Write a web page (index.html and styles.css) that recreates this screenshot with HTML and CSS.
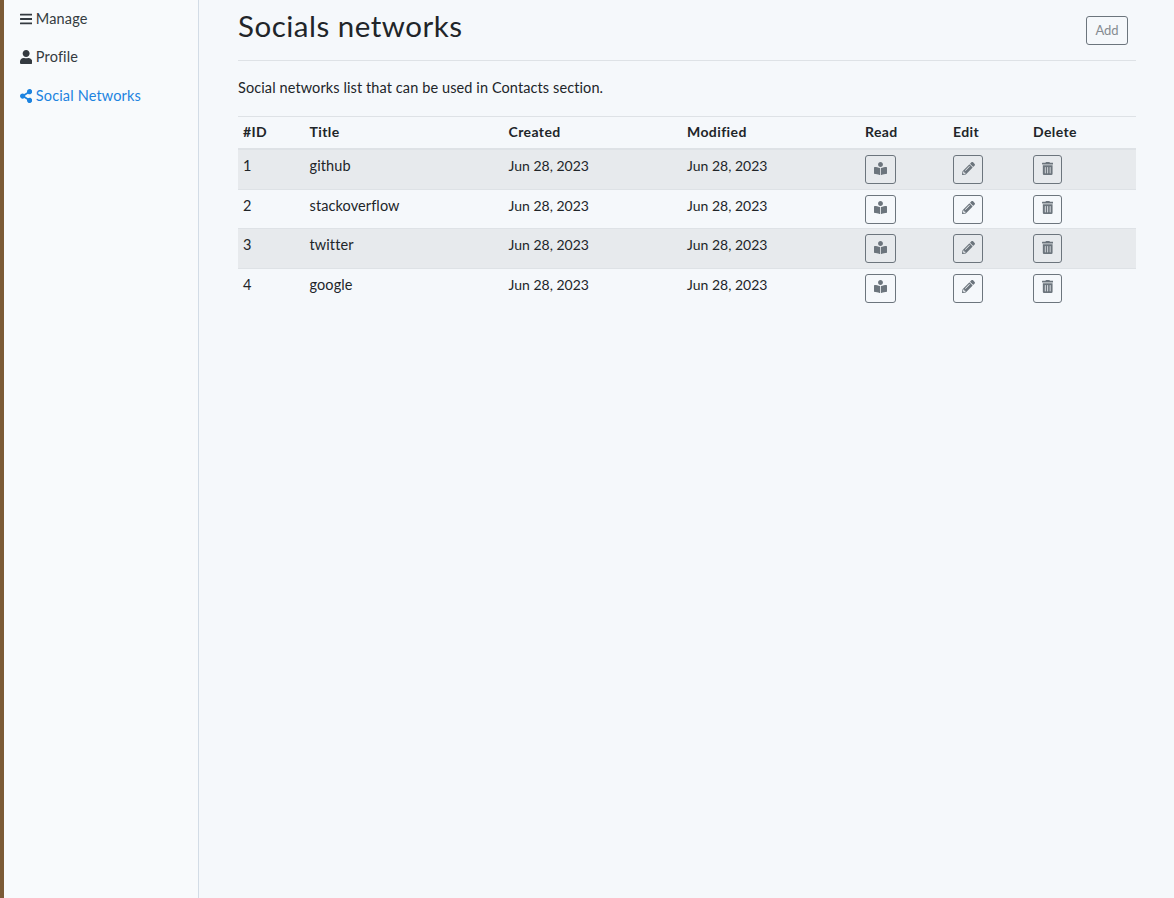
FILE: index.html
```html
<!DOCTYPE html>
<html lang="en">
<head>
  <meta charset="utf-8">
  <title>Socials networks</title>
  <link rel="stylesheet" href="styles.css">
</head>
<body>
<div class="wrapper">

  <nav class="sidebar">
    <a class="nav-link" href="#">
      <svg class="nav-icon" viewBox="0 0 448 512"><path d="M16 132h416c8.837 0 16-7.163 16-16V76c0-8.837-7.163-16-16-16H16C7.163 60 0 67.163 0 76v40c0 8.837 7.163 16 16 16zm0 160h416c8.837 0 16-7.163 16-16v-40c0-8.837-7.163-16-16-16H16c-8.837 0-16 7.163-16 16v40c0 8.837 7.163 16 16 16zm0 160h416c8.837 0 16-7.163 16-16v-40c0-8.837-7.163-16-16-16H16c-8.837 0-16 7.163-16 16v40c0 8.837 7.163 16 16 16z"/></svg>
      Manage
    </a>
    <a class="nav-link" href="#">
      <svg class="nav-icon" viewBox="0 0 448 512"><path d="M224 256c70.7 0 128-57.3 128-128S294.7 0 224 0 96 57.3 96 128s57.3 128 128 128zm89.6 32h-16.7c-22.2 10.2-46.9 16-72.9 16s-50.6-5.8-72.9-16h-16.7C60.2 288 0 348.2 0 422.4V464c0 26.5 21.5 48 48 48h352c26.5 0 48-21.5 48-48v-41.6c0-74.2-60.2-134.4-134.4-134.4z"/></svg>
      Profile
    </a>
    <a class="nav-link active" href="#">
      <svg class="nav-icon" viewBox="0 0 448 512"><path d="M352 320c-22.608 0-43.387 7.819-59.79 20.895l-102.486-64.054a96.551 96.551 0 0 0 0-41.683l102.486-64.054C308.613 184.181 329.392 192 352 192c53.019 0 96-42.981 96-96S405.019 0 352 0s-96 42.981-96 96c0 7.158.79 14.13 2.276 20.841L155.79 180.895C139.387 167.819 118.608 160 96 160c-53.019 0-96 42.981-96 96s42.981 96 96 96c22.608 0 43.387-7.819 59.79-20.895l102.486 64.054A96.301 96.301 0 0 0 256 416c0 53.019 42.981 96 96 96s96-42.981 96-96-42.981-96-96-96z"/></svg>
      Social Networks
    </a>
  </nav>

  <main class="content">
    <div class="page-head">
      <h1 class="page-title">Socials networks</h1>
      <a class="btn btn-add" href="#">Add</a>
    </div>

    <p class="lead-text">Social networks list that can be used in Contacts section.</p>

    <table class="list-table">
      <thead>
        <tr>
          <th class="col-id">#ID</th>
          <th class="col-title">Title</th>
          <th class="col-created">Created</th>
          <th class="col-modified">Modified</th>
          <th class="col-read">Read</th>
          <th class="col-edit">Edit</th>
          <th>Delete</th>
        </tr>
      </thead>
      <tbody>
        <tr>
          <td>1</td><td>github</td><td class="cell-date">Jun 28, 2023</td><td class="cell-date">Jun 28, 2023</td>
          <td><a class="btn btn-read" href="#"><svg class="btn-icon" viewBox="0 0 512 512"><path d="M352 96c0-53.02-42.98-96-96-96s-96 42.98-96 96 42.98 96 96 96 96-42.98 96-96zM233.59 241.1c-59.33-36.32-155.43-46.3-203.79-49.05C13.55 191.13 0 203.51 0 219.14v222.8c0 14.33 11.59 26.28 26.49 27.05 43.66 2.29 131.99 10.68 193.04 41.43 9.37 4.72 20.48-1.71 20.48-11.87V252.56c-.01-4.67-2.32-8.95-6.42-11.46zm248.61-49.05c-48.35 2.74-144.46 12.73-203.78 49.05-4.1 2.51-6.41 6.96-6.41 11.63v245.79c0 10.19 11.14 16.63 20.54 11.9 61.04-30.72 149.32-39.11 192.97-41.4 14.9-.78 26.49-12.73 26.49-27.06V219.14c-.01-15.63-13.56-28.01-29.81-27.09z"/></svg></a></td>
          <td><a class="btn btn-edit" href="#"><svg class="btn-icon" viewBox="0 0 512 512"><path d="M497.9 142.1l-46.1 46.1c-4.7 4.7-12.3 4.7-17 0l-111-111c-4.7-4.7-4.7-12.3 0-17l46.1-46.1c18.7-18.7 49.1-18.7 67.9 0l60.1 60.1c18.8 18.7 18.8 49.1 0 67.9zM284.2 99.8L21.6 362.4.4 483.9c-2.9 16.4 11.4 30.6 27.8 27.8l121.5-21.3 262.6-262.6c4.7-4.7 4.7-12.3 0-17l-111-111c-4.8-4.7-12.4-4.7-17.1 0zM124.1 339.9c-5.5-5.5-5.5-14.3 0-19.8l154-154c5.5-5.5 14.3-5.5 19.8 0s5.5 14.3 0 19.8l-154 154c-5.5 5.5-14.3 5.5-19.8 0zM88 424h48v36.3l-64.5 11.3-31.1-31.1L51.7 376H88v48z"/></svg></a></td>
          <td><a class="btn btn-delete" href="#"><svg class="btn-icon trash" viewBox="0 0 448 512"><path d="M32 464a48 48 0 0 0 48 48h288a48 48 0 0 0 48-48V128H32zm272-256a16 16 0 0 1 32 0v224a16 16 0 0 1-32 0zm-96 0a16 16 0 0 1 32 0v224a16 16 0 0 1-32 0zm-96 0a16 16 0 0 1 32 0v224a16 16 0 0 1-32 0zM432 32H312l-9.4-18.7A24 24 0 0 0 281.1 0H166.8a23.72 23.72 0 0 0-21.4 13.3L136 32H16A16 16 0 0 0 0 48v32a16 16 0 0 0 16 16h416a16 16 0 0 0 16-16V48a16 16 0 0 0-16-16z"/></svg></a></td>
        </tr>
        <tr>
          <td>2</td><td>stackoverflow</td><td class="cell-date">Jun 28, 2023</td><td class="cell-date">Jun 28, 2023</td>
          <td><a class="btn btn-read" href="#"><svg class="btn-icon" viewBox="0 0 512 512"><path d="M352 96c0-53.02-42.98-96-96-96s-96 42.98-96 96 42.98 96 96 96 96-42.98 96-96zM233.59 241.1c-59.33-36.32-155.43-46.3-203.79-49.05C13.55 191.13 0 203.51 0 219.14v222.8c0 14.33 11.59 26.28 26.49 27.05 43.66 2.29 131.99 10.68 193.04 41.43 9.37 4.72 20.48-1.71 20.48-11.87V252.56c-.01-4.67-2.32-8.95-6.42-11.46zm248.61-49.05c-48.35 2.74-144.46 12.73-203.78 49.05-4.1 2.51-6.41 6.96-6.41 11.63v245.79c0 10.19 11.14 16.63 20.54 11.9 61.04-30.72 149.32-39.11 192.97-41.4 14.9-.78 26.49-12.73 26.49-27.06V219.14c-.01-15.63-13.56-28.01-29.81-27.09z"/></svg></a></td>
          <td><a class="btn btn-edit" href="#"><svg class="btn-icon" viewBox="0 0 512 512"><path d="M497.9 142.1l-46.1 46.1c-4.7 4.7-12.3 4.7-17 0l-111-111c-4.7-4.7-4.7-12.3 0-17l46.1-46.1c18.7-18.7 49.1-18.7 67.9 0l60.1 60.1c18.8 18.7 18.8 49.1 0 67.9zM284.2 99.8L21.6 362.4.4 483.9c-2.9 16.4 11.4 30.6 27.8 27.8l121.5-21.3 262.6-262.6c4.7-4.7 4.7-12.3 0-17l-111-111c-4.8-4.7-12.4-4.7-17.1 0zM124.1 339.9c-5.5-5.5-5.5-14.3 0-19.8l154-154c5.5-5.5 14.3-5.5 19.8 0s5.5 14.3 0 19.8l-154 154c-5.5 5.5-14.3 5.5-19.8 0zM88 424h48v36.3l-64.5 11.3-31.1-31.1L51.7 376H88v48z"/></svg></a></td>
          <td><a class="btn btn-delete" href="#"><svg class="btn-icon trash" viewBox="0 0 448 512"><path d="M32 464a48 48 0 0 0 48 48h288a48 48 0 0 0 48-48V128H32zm272-256a16 16 0 0 1 32 0v224a16 16 0 0 1-32 0zm-96 0a16 16 0 0 1 32 0v224a16 16 0 0 1-32 0zm-96 0a16 16 0 0 1 32 0v224a16 16 0 0 1-32 0zM432 32H312l-9.4-18.7A24 24 0 0 0 281.1 0H166.8a23.72 23.72 0 0 0-21.4 13.3L136 32H16A16 16 0 0 0 0 48v32a16 16 0 0 0 16 16h416a16 16 0 0 0 16-16V48a16 16 0 0 0-16-16z"/></svg></a></td>
        </tr>
        <tr>
          <td>3</td><td>twitter</td><td class="cell-date">Jun 28, 2023</td><td class="cell-date">Jun 28, 2023</td>
          <td><a class="btn btn-read" href="#"><svg class="btn-icon" viewBox="0 0 512 512"><path d="M352 96c0-53.02-42.98-96-96-96s-96 42.98-96 96 42.98 96 96 96 96-42.98 96-96zM233.59 241.1c-59.33-36.32-155.43-46.3-203.79-49.05C13.55 191.13 0 203.51 0 219.14v222.8c0 14.33 11.59 26.28 26.49 27.05 43.66 2.29 131.99 10.68 193.04 41.43 9.37 4.72 20.48-1.71 20.48-11.87V252.56c-.01-4.67-2.32-8.95-6.42-11.46zm248.61-49.05c-48.35 2.74-144.46 12.73-203.78 49.05-4.1 2.51-6.41 6.96-6.41 11.63v245.79c0 10.19 11.14 16.63 20.54 11.9 61.04-30.72 149.32-39.11 192.97-41.4 14.9-.78 26.49-12.73 26.49-27.06V219.14c-.01-15.63-13.56-28.01-29.81-27.09z"/></svg></a></td>
          <td><a class="btn btn-edit" href="#"><svg class="btn-icon" viewBox="0 0 512 512"><path d="M497.9 142.1l-46.1 46.1c-4.7 4.7-12.3 4.7-17 0l-111-111c-4.7-4.7-4.7-12.3 0-17l46.1-46.1c18.7-18.7 49.1-18.7 67.9 0l60.1 60.1c18.8 18.7 18.8 49.1 0 67.9zM284.2 99.8L21.6 362.4.4 483.9c-2.9 16.4 11.4 30.6 27.8 27.8l121.5-21.3 262.6-262.6c4.7-4.7 4.7-12.3 0-17l-111-111c-4.8-4.7-12.4-4.7-17.1 0zM124.1 339.9c-5.5-5.5-5.5-14.3 0-19.8l154-154c5.5-5.5 14.3-5.5 19.8 0s5.5 14.3 0 19.8l-154 154c-5.5 5.5-14.3 5.5-19.8 0zM88 424h48v36.3l-64.5 11.3-31.1-31.1L51.7 376H88v48z"/></svg></a></td>
          <td><a class="btn btn-delete" href="#"><svg class="btn-icon trash" viewBox="0 0 448 512"><path d="M32 464a48 48 0 0 0 48 48h288a48 48 0 0 0 48-48V128H32zm272-256a16 16 0 0 1 32 0v224a16 16 0 0 1-32 0zm-96 0a16 16 0 0 1 32 0v224a16 16 0 0 1-32 0zm-96 0a16 16 0 0 1 32 0v224a16 16 0 0 1-32 0zM432 32H312l-9.4-18.7A24 24 0 0 0 281.1 0H166.8a23.72 23.72 0 0 0-21.4 13.3L136 32H16A16 16 0 0 0 0 48v32a16 16 0 0 0 16 16h416a16 16 0 0 0 16-16V48a16 16 0 0 0-16-16z"/></svg></a></td>
        </tr>
        <tr>
          <td>4</td><td>google</td><td class="cell-date">Jun 28, 2023</td><td class="cell-date">Jun 28, 2023</td>
          <td><a class="btn btn-read" href="#"><svg class="btn-icon" viewBox="0 0 512 512"><path d="M352 96c0-53.02-42.98-96-96-96s-96 42.98-96 96 42.98 96 96 96 96-42.98 96-96zM233.59 241.1c-59.33-36.32-155.43-46.3-203.79-49.05C13.55 191.13 0 203.51 0 219.14v222.8c0 14.33 11.59 26.28 26.49 27.05 43.66 2.29 131.99 10.68 193.04 41.43 9.37 4.72 20.48-1.71 20.48-11.87V252.56c-.01-4.67-2.32-8.95-6.42-11.46zm248.61-49.05c-48.35 2.74-144.46 12.73-203.78 49.05-4.1 2.51-6.41 6.96-6.41 11.63v245.79c0 10.19 11.14 16.63 20.54 11.9 61.04-30.72 149.32-39.11 192.97-41.4 14.9-.78 26.49-12.73 26.49-27.06V219.14c-.01-15.63-13.56-28.01-29.81-27.09z"/></svg></a></td>
          <td><a class="btn btn-edit" href="#"><svg class="btn-icon" viewBox="0 0 512 512"><path d="M497.9 142.1l-46.1 46.1c-4.7 4.7-12.3 4.7-17 0l-111-111c-4.7-4.7-4.7-12.3 0-17l46.1-46.1c18.7-18.7 49.1-18.7 67.9 0l60.1 60.1c18.8 18.7 18.8 49.1 0 67.9zM284.2 99.8L21.6 362.4.4 483.9c-2.9 16.4 11.4 30.6 27.8 27.8l121.5-21.3 262.6-262.6c4.7-4.7 4.7-12.3 0-17l-111-111c-4.8-4.7-12.4-4.7-17.1 0zM124.1 339.9c-5.5-5.5-5.5-14.3 0-19.8l154-154c5.5-5.5 14.3-5.5 19.8 0s5.5 14.3 0 19.8l-154 154c-5.5 5.5-14.3 5.5-19.8 0zM88 424h48v36.3l-64.5 11.3-31.1-31.1L51.7 376H88v48z"/></svg></a></td>
          <td><a class="btn btn-delete" href="#"><svg class="btn-icon trash" viewBox="0 0 448 512"><path d="M32 464a48 48 0 0 0 48 48h288a48 48 0 0 0 48-48V128H32zm272-256a16 16 0 0 1 32 0v224a16 16 0 0 1-32 0zm-96 0a16 16 0 0 1 32 0v224a16 16 0 0 1-32 0zm-96 0a16 16 0 0 1 32 0v224a16 16 0 0 1-32 0zM432 32H312l-9.4-18.7A24 24 0 0 0 281.1 0H166.8a23.72 23.72 0 0 0-21.4 13.3L136 32H16A16 16 0 0 0 0 48v32a16 16 0 0 0 16 16h416a16 16 0 0 0 16-16V48a16 16 0 0 0-16-16z"/></svg></a></td>
        </tr>
      </tbody>
    </table>
  </main>

</div>
</body>
</html>
```

FILE: styles.css
```css
html, body {
  margin: 0;
  height: 100%;
}

body {
  background-color: #f5f8fb;
  color: #212529;
  font-family: "Lato", "Liberation Sans", sans-serif;
  font-size: 14.5px;
  line-height: 21px;
}

a {
  text-decoration: none;
}

.wrapper {
  display: flex;
  min-height: 898px;
  box-sizing: border-box;
  border-left: 4px solid #7b5a36;
}

/* sidebar */
.sidebar {
  width: 194px;
  flex: none;
  background-color: #f8fafc;
  border-right: 1px solid #d3dce6;
  padding-top: 7.75px;
}

.nav-link {
  display: block;
  height: 21px;
  padding: 0 16px 17.5px;
  color: #343a40;
  letter-spacing: 0.15px;
}

.nav-link.active {
  color: #1c83e0;
}

.nav-icon {
  width: 12.25px;
  height: 14px;
  margin-right: -0.3px;
  fill: currentColor;
  vertical-align: -2px;
}

/* main area */
.content {
  flex: 1;
  padding: 0 38px 0 39px;
}

.page-head {
  display: flex;
  justify-content: space-between;
  height: 60px;
  border-bottom: 1px solid #dee2e6;
}

.page-title {
  margin: 6px 0 0;
  font-size: 29.5px;
  line-height: 40px;
  font-weight: 400;
  letter-spacing: 0.5px;
}

.page-head .btn-add {
  width: 42px;
  height: 29px;
  margin: 16px 8px 0 0;
  font-size: 13px;
  color: #858b91;
}

.lead-text {
  margin: 16px 0 18px;
  letter-spacing: 0.1px;
}

/* table */
.list-table {
  width: 100%;
  table-layout: fixed;
  border-collapse: collapse;
}

.list-table th {
  height: 27px;
  padding: 4px 4px 0 5px;
  vertical-align: top;
  text-align: left;
  font-size: 14px;
  font-weight: 700;
  letter-spacing: 0.4px;
  border-top: 1px solid #dee2e6;
  border-bottom: 2px solid #dee2e6;
}

.list-table td {
  height: 30.5px;
  padding: 5px 4px 3px 5px;
  vertical-align: top;
  border-top: 1px solid #dee2e6;
  letter-spacing: 0.1px;
}

.list-table tbody tr:nth-child(odd) {
  background-color: #e7eaed;
}

.list-table td.cell-date {
  font-size: 14px;
  letter-spacing: 0;
}

.col-id { width: 57.5px; }
.col-title { width: 190px; }
.col-created { width: 169.5px; }
.col-modified { width: 169px; }
.col-read { width: 79px; }
.col-edit { width: 71px; }

.btn {
  display: inline-flex;
  align-items: center;
  justify-content: center;
  box-sizing: border-box;
  height: 29px;
  border: 1px solid #6c757d;
  border-radius: 3px;
  color: #6c757d;
}

.btn-read { width: 31px; }
.btn-edit { width: 30px; }
.btn-delete { width: 29px; }

.btn-icon {
  width: 13px;
  height: 13px;
  fill: currentColor;
  margin-top: -3px;
}

.btn-icon.trash {
  width: 11.4px;
}
```
